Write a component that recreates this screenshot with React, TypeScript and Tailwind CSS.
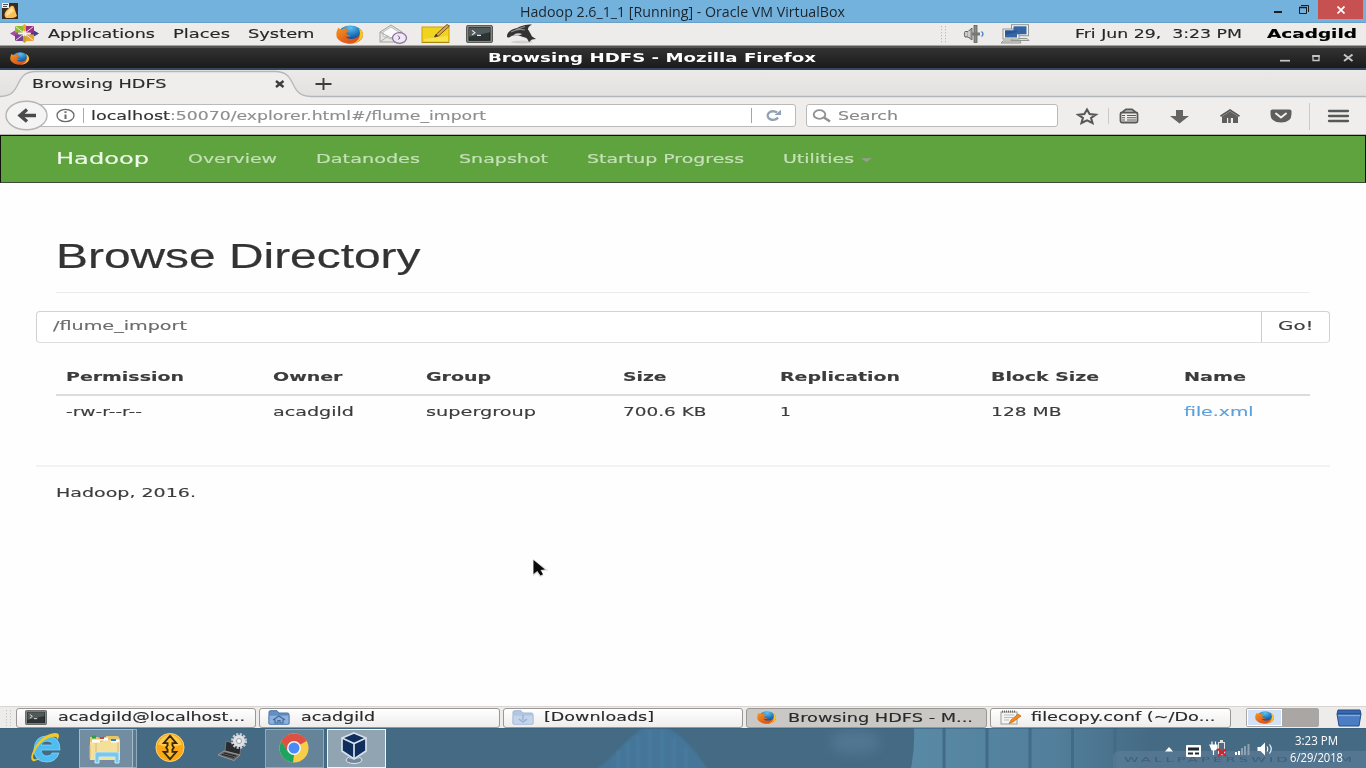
import { useLayoutEffect, useRef, useState, type ReactNode } from "react";

/* Text stretched horizontally so that it fills the given width. */
function Fit({ w, className = "", children }: { w: number; className?: string; children: ReactNode }) {
  const ref = useRef<HTMLSpanElement>(null);
  const [scale, setScale] = useState(1);
  useLayoutEffect(() => {
    if (ref.current && ref.current.offsetWidth > 0) {
      const probe = ref.current;
      const previous = probe.style.transform;
      probe.style.transform = "none";
      setScale(w / probe.getBoundingClientRect().width);
      probe.style.transform = previous;
    }
  }, [w]);
  return (
    <span className={`block shrink-0 whitespace-pre ${className}`} style={{ width: w }}>
      <span ref={ref} className="inline-block origin-left" style={{ transform: `scaleX(${scale})` }}>
        {children}
      </span>
    </span>
  );
}

function Firefox({ className = "" }: { className?: string }) {
  return (
    <svg className={`shrink-0 ${className}`} viewBox="0 0 32 32" preserveAspectRatio="none">
      <defs>
        <linearGradient id="ffo" x1="0" y1="0" x2="1" y2="1">
          <stop offset="0" stopColor="#f39a22" />
          <stop offset="0.5" stopColor="#e4661b" />
          <stop offset="1" stopColor="#d5411a" />
        </linearGradient>
        <radialGradient id="ffb" cx="0.5" cy="0.15" r="0.8">
          <stop offset="0" stopColor="#5cc3f0" />
          <stop offset="0.6" stopColor="#1c6fb8" />
          <stop offset="1" stopColor="#123f7a" />
        </radialGradient>
      </defs>
      <circle cx="17" cy="14.5" r="13.8" fill="url(#ffb)" />
      <path d="M3 4C0 10 0 16 1 21c3 7 9 10.500 16 10.500 9 0 15-7 15-15 0-5-2-8-4-10 1 4 1 7 0 10-2 5-6 7-10 7-4 0-6-2-7-4 3 1 5 0 7-2-3 0-5-1-6-3 0-2 2-3 4-3 0-2-3-3-5-3 0-1 1-2 2-3-3 0-5 1-6 2C6 7 4 7 3 4z" fill="url(#ffo)" />
      <path d="M27 5c3 3 5 7 5 11 0 8-6 14-13 15 6-3 9-8 9-13 1-5 0-9-1-13z" fill="#f6c62d" />
    </svg>
  );
}

function Terminal({ className = "" }: { className?: string }) {
  return (
    <svg className={`shrink-0 ${className}`} viewBox="0 0 27 20" preserveAspectRatio="none">
      <rect x="0.5" y="0.5" width="26" height="19" rx="1.5" fill="#858882" stroke="#4f524e" />
      <rect x="3" y="3" width="21" height="14" fill="#2d3436" stroke="#1c2122" />
      <path d="M3 3h21v5L3 13z" fill="#515a5b" />
      <path d="M6 6l3 2.5L6 11M11 11.5h4" stroke="#e6e9e5" strokeWidth="1.2" fill="none" />
    </svg>
  );
}

function Folder({ kind }: { kind: "home" | "down" }) {
  const home = kind === "home";
  return (
    <svg className="h-[15px] w-[22px] shrink-0" viewBox="0 0 22 15" preserveAspectRatio="none">
      <path d="M1 14V2Q1 .7 2.5.7H9L11 3h8.5Q21 3 21 4.5V14z" fill={home ? "#6590c4" : "#b3c7e2"} stroke={home ? "#4a72a8" : "#a3b8d5"} />
      <path d="M1 6q0-1 1-1h17.5q1.5 0 1.5 1v7q0 1.300-1.500 1.300h-17Q1 14.300 1 13z" fill={home ? "#8db1dc" : "#c3d4eb"} stroke={home ? "#5a84ba" : "#aec2de"} />
      {home ? (
        <path d="M5 10l6-4 6 4M7 9.500V13h3v-2.500h2V13h3V9.500" fill="none" stroke="#41699e" strokeWidth="1.2" />
      ) : (
        <path d="M11 5v5M7 9l4 3 4-3" fill="none" stroke="#94abcb" strokeWidth="1.2" />
      )}
    </svg>
  );
}

function HostTitleBar() {
  return (
    <div className="flex h-[23px] shrink-0 border-b border-[#68a0c8] bg-[#74b2de] text-[#1c252c]">
      <svg className="mt-[3px] ml-[2px] h-4 w-4 shrink-0" viewBox="0 0 16 16">
        <rect width="16" height="16" fill="#3b2a20" />
        <path d="M4 15Q1 12 4 8L9 3q2-1 3 1l3 9q-2 2-5 2z" fill="#fbbf55" />
        <path d="M5 13Q3 11 6 8l4-4 2 4z" fill="#ffe09b" />
        <rect x="0" y="0" width="7" height="5" fill="#eee" />
        <path d="M1 1.500h5M1 3.500h4" stroke="#555" />
      </svg>
      <Fit w={325} className="ml-[501.500px] font-['Open_Sans',sans-serif] text-[14.5px] leading-[23px]">
        Hadoop 2.6_1_1 [Running] - Oracle VM VirtualBox
      </Fit>
      <svg className="ml-[428.500px] h-[22px] w-[37px] shrink-0" viewBox="0 0 37 22" fill="none" stroke="#1c1c1c">
        <path d="M1 12h8" strokeWidth="2" />
        <path d="M26.500 7.500h7v6h-7zM28 5.500h7.500V12" />
        <path d="M26 7.500h8" strokeWidth="1.500" />
      </svg>
      <div className="ml-[8px] flex h-[19px] w-[45px] items-center justify-center bg-[#c75050]">
        <svg className="h-2 w-2" viewBox="0 0 8 8" stroke="#fff" strokeWidth="1.700">
          <path d="M.5.5l7 7M7.500.5l-7 7" />
        </svg>
      </div>
    </div>
  );
}

function GnomePanel() {
  return (
    <div className="flex h-[23px] shrink-0 items-center border-b border-[#a5a3a0] bg-[#edecea] pb-[1px] font-['DejaVu_Sans',sans-serif] text-[13px] leading-[18px] text-[#262626] [-webkit-text-stroke:0.150px]">
      <svg className="ml-[10px] h-[19px] w-[29px] shrink-0" viewBox="0 0 29 19">
        <path d="M14.500 0l4.500 4-4.500 3.500L10 4z" fill="#efa724" />
        <path d="M14.500 19l4.500-4-4.500-3.500L10 15z" fill="#b5a82c" />
        <path d="M0 9.500l5-3 5 3-5 3z" fill="#a14f9c" />
        <path d="M29 9.500l-5-3-5 3 5 3z" fill="#4a3d86" />
        <path d="M5 2h8v6.500H5z" fill="#8fbb31" />
        <path d="M16 2h8v6.500h-8z" fill="#9c2e8a" />
        <path d="M5 10.500h8V17H5z" fill="#7a3f96" />
        <path d="M16 10.500h8V17h-8z" fill="#eda12b" />
        <path d="M5.500 2.500l18 14M23.500 2.500l-18 14M8 9.500h13" stroke="#f4f0ee" strokeWidth="0.900" />
      </svg>
      <Fit w={107} className="ml-[8.500px]">Applications</Fit>
      <Fit w={57} className="ml-[18px]">Places</Fit>
      <Fit w={66.5} className="ml-[18px]">System</Fit>
      <Firefox className="mt-[1px] ml-[21.500px] h-[19px] w-[27px]" />
      <svg className="mt-[1px] ml-[15.500px] h-[20px] w-[30px] shrink-0" viewBox="0 0 30 20" preserveAspectRatio="none">
        <path d="M2 18V8L13 1l11 7v10z" fill="#e7e7e4" stroke="#a2a29f" />
        <path d="M5 8L13 3l8 5v4l-8 3-8-3z" fill="#fafafa" stroke="#bbb" />
        <path d="M2 18l8-6M2 8l11 6 11-6" stroke="#a8a8a6" fill="none" />
        <ellipse cx="21.500" cy="14" rx="7" ry="5.300" fill="#eee9f2" stroke="#8d6da0" strokeWidth="1.300" />
        <path d="M20 11.500l2 2.500-2 1.500" stroke="#666" fill="none" />
      </svg>
      <svg className="ml-[13px] h-[20px] w-[30px] shrink-0" viewBox="0 0 30 20" preserveAspectRatio="none">
        <rect x="1" y="3" width="27" height="15.500" fill="#f0d31e" stroke="#c9a20c" />
        <path d="M3 15l24-3v5H3z" fill="#f8e34e" />
        <path d="M1 18.500h27" stroke="#a98709" />
        <path d="M26 .5l2.500 1.500-11 10-4 1 2-3z" fill="#dda454" stroke="#68471a" strokeWidth="0.900" />
        <path d="M13 13l2-3 2 1.500z" fill="#333" />
      </svg>
      <Terminal className="mt-[1px] ml-[15px] h-[18px] w-[27px]" />
      <svg className="mt-[1px] ml-[14px] h-[20px] w-[31px] shrink-0" viewBox="0 0 31 20" preserveAspectRatio="none">
        <ellipse cx="15" cy="18" rx="11" ry="1.500" fill="#d2d0ce" />
        <path d="M0 12C0 8 5 5 10 4c4-2 8-3.500 15-3.500-3 1.500-4 3-4 5 2 3 3 5 4 7l4 2.500-4 .5-3 2.500-2-3.500q-2-1.500-4-1.500l-4-1.500c-4-.5-7 0-9 1.500-2 1-3 .5-3-1z" fill="#333" />
        <path d="M4 8q7-4 14-2M9 5.500l9-3" stroke="#8d8d8d" strokeWidth="1.100" fill="none" />
        <path d="M3 11.500q4 0 6-2 5-1 6 1-3 .5-5 .5-3 0-7 .5z" fill="#d2d2d2" />
      </svg>
      <svg className="mt-[1px] ml-[402px] h-[17px] w-[8px] shrink-0" viewBox="0 0 8 17">
        <path d="M1.500 0v17M5.500 0v17" stroke="#bdbcba" strokeDasharray="1.300 1.700" />
      </svg>
      <svg className="mt-[1px] ml-[14.500px] h-[18px] w-[23px] shrink-0" viewBox="0 0 23 18" preserveAspectRatio="none">
        <path d="M2 6.500h3l4-3.500v12L5 12H2Q.5 9 2 6.500z" fill="#aaa" stroke="#676965" />
        <path d="M3 7v4M6 6v6" stroke="#eee" />
        <rect x="11" y=".5" width="3" height="17" fill="#8b8e88" stroke="#5d605a" strokeWidth=".8" />
        <path d="M9 9h8" stroke="#777" strokeWidth="3" />
        <path d="M18.500 6.500q3 2.500 0 5" fill="none" stroke="#4e83c6" strokeWidth="1.400" />
      </svg>
      <svg className="ml-[15px] h-[20px] w-[29px] shrink-0" viewBox="0 0 29 20" preserveAspectRatio="none">
        <g stroke="#92948f">
          <rect x="10.500" y=".7" width="17" height="11" fill="#f5f5f3" />
          <path d="M12 14.500h14l2 2H10z" fill="#ddd" />
          <rect x="2" y="5" width="16" height="10" fill="#f5f5f3" />
          <path d="M2 17h17l1 2H0z" fill="#ddd" />
        </g>
        <rect x="12.500" y="2.300" width="13" height="8" fill="#3465a4" />
        <rect x="4" y="6.500" width="12" height="7" fill="#3465a4" />
        <path d="M4 11V6.500h12V8z" fill="#2a5493" />
      </svg>
      <Fit w={167} className="ml-[45px]">Fri Jun 29,  3:23 PM</Fit>
      <Fit w={90} className="ml-[25px] font-bold text-black">Acadgild</Fit>
    </div>
  );
}

function GuestTitleBar() {
  return (
    <div className="flex h-[24px] shrink-0 items-center border-t-2 border-b-2 border-t-[#55534f] border-b-[#34475f] bg-linear-to-b from-[#323232] to-[#1b1b1b] font-['DejaVu_Sans',sans-serif] text-[13px] leading-[18px] text-white">
      <Firefox className="ml-[10px] h-[13px] w-[19px]" />
      <Fit w={328} className="ml-[459px] font-bold">Browsing HDFS - Mozilla Firefox</Fit>
      <svg className="ml-[463px] h-5 w-[80px] shrink-0" viewBox="0 0 80 20" fill="none" stroke="#c6c6c4">
        <path d="M1 12.700h10" strokeWidth="1.700" />
        <path d="M34 8h6v4.500h-6z" strokeWidth="1.300" />
        <path d="M33.300 8h7.500" strokeWidth="1.900" />
        <path d="M65 6.500l8.500 6.500M73.500 6.500L65 13" strokeWidth="2" />
      </svg>
    </div>
  );
}

function TabStrip() {
  return (
    <div className="grid h-[28px] shrink-0 bg-linear-to-b from-[#ebeae8] to-[#e2e1df] font-['DejaVu_Sans',sans-serif] text-[13px] leading-[18px] text-[#2b2b2b] [-webkit-text-stroke:0.150px]">
      <svg className="col-start-1 row-start-1 h-[28px] w-[1366px]" viewBox="0 0 1366 28">
        <path d="M0 28v-1C24 27 12 1 36 1H275C299 1 287 27 311 27H1366v1z" fill="#efeeed" />
        <path d="M0 26.500C24 26.500 12 1.500 36 1.500H275C299 1.500 287 26.500 311 26.500H1366" fill="none" stroke="#b4b7ba" strokeWidth="1.300" />
      </svg>
      <div className="z-10 col-start-1 row-start-1 flex items-center">
        <Fit w={134.5} className="ml-[31.500px]">Browsing HDFS</Fit>
        <svg className="ml-[109px] h-3 w-[60px] shrink-0" viewBox="0 0 60 12" fill="none" stroke="#3d3d3d">
          <path d="M1 3l7.500 6M8.500 3L1 9" strokeWidth="2.400" />
          <path d="M40.500 6h16M48.500 0v12" strokeWidth="1.900" />
        </svg>
      </div>
    </div>
  );
}

function NavToolbar() {
  return (
    <div className="flex h-[37px] shrink-0 items-center border-b border-[#b9b7b5] bg-[#efeeed] pb-[1px] font-['DejaVu_Sans',sans-serif] text-[13px] leading-[18px] [-webkit-text-stroke:0.150px]">
      <svg className="z-10 ml-[5px] h-[31px] w-[43px] shrink-0" viewBox="0 0 43 31">
        <ellipse cx="21.500" cy="15.500" rx="20.500" ry="14.300" fill="#f5f4f4" stroke="#b5b4b3" strokeWidth="1.400" />
        <path d="M15 15.500h16M22 9.500l-7 6 7 6" fill="none" stroke="#4a4a4a" strokeWidth="3.400" />
      </svg>
      <div className="-ml-[10px] flex h-[23px] w-[758px] shrink-0 items-center rounded-r-[3px] border border-[#bcbab9] bg-white text-[#8e8e8e]">
        <svg className="ml-[17px] h-[15px] w-[20px] shrink-0" viewBox="0 0 20 15" fill="none" stroke="#6a6a6a">
          <ellipse cx="9.500" cy="7.500" rx="8.500" ry="6.200" strokeWidth="1.300" />
          <path d="M9.500 6.500V11M9.500 3.300v1.700" strokeWidth="2" />
        </svg>
        <span className="ml-[7px] h-[15px] w-px shrink-0 bg-[#aaa]" />
        <Fit w={79} className="ml-[6.500px] text-[#333]">localhost</Fit>
        <Fit w={316}>:50070/explorer.html#/flume_import</Fit>
        <span className="ml-[265.500px] h-[15px] w-px shrink-0 bg-[#a5a5a5]" />
        <svg className="ml-[13px] h-[13px] w-[17px] shrink-0" viewBox="0 0 17 13" fill="none" stroke="#94a1b1">
          <path d="M13 8.500A5.500 4.300 0 1 1 12 3.500" strokeWidth="2.300" />
          <path d="M16 .7V6H9.500z" fill="#94a1b1" stroke="none" />
        </svg>
      </div>
      <div className="ml-[10px] flex h-[23px] w-[252px] shrink-0 items-center rounded-[3px] border border-[#bcbab9] bg-white text-[#898989]">
        <svg className="ml-[5px] h-[14px] w-[20px] shrink-0" viewBox="0 0 20 14" fill="none" stroke="#929292">
          <ellipse cx="7.500" cy="5.500" rx="5.800" ry="4.400" strokeWidth="1.900" />
          <path d="M12 8.500l6 4" strokeWidth="2.600" />
        </svg>
        <Fit w={60} className="ml-[5.500px]">Search</Fit>
      </div>
      <svg className="ml-[18px] h-[32px] w-[280px] shrink-0" viewBox="0 0 280 32" fill="none" stroke="#585858">
        <path d="M11 9.500l2.600 4.500 6.200.7-4.700 3.300 1.400 5-5.500-2.600L5.500 23l1.400-5-4.700-3.300 6.200-.7z" strokeWidth="2.100" />
        <path d="M32.500 8v16M233.500 3v27" stroke="#cbc9c7" strokeWidth="1" />
        <rect x="44.500" y="12.500" width="17" height="10" rx="1.500" strokeWidth="1.800" />
        <path d="M46.500 12l3.500-2.500h6l3.500 2.500" strokeWidth="1.800" />
        <path d="M46 15.500h3M51 15.500h9M46 17.700h3M51 17.700h9M46 20h3M51 20h9" strokeWidth="1.100" />
        <path d="M100 10h7v6h6l-9.500 7.500-9.500-7.500h6z" fill="#646464" stroke="none" />
        <path d="M146 16.500l8-5.200 8 5.200v6.500h-5v-5h-2.200v5h-2.600v-5H151v5h-5z" fill="#5e5e5e" stroke="none" />
        <path d="M144.500 16.300l9.500-6.300 9.500 6.300" strokeWidth="1.700" />
        <path d="M194.500 11q0-1.500 2-1.500h17q2 0 2 1.500v3q0 8.500-10.500 8.500T194.500 14z" fill="#5e5e5e" stroke="none" />
        <path d="M200 13.500l5 4 5-4" stroke="#f0efee" strokeWidth="2" strokeLinecap="round" />
        <path d="M253 11h19M253 16h19M253 21h19" strokeWidth="2.300" strokeLinecap="round" />
      </svg>
    </div>
  );
}

function SiteNav() {
  return (
    <nav className="flex h-[48px] shrink-0 items-center border border-[#101408] border-b-[#3c4b3a] bg-[#5fa33f] font-['DejaVu_Sans',sans-serif] text-[13px] leading-[20px] text-[#c6e0b8] [-webkit-text-stroke:0.150px]">
      <Fit w={93} className="ml-[55px] text-[16px] text-[#eff7eb]">Hadoop</Fit>
      <Fit w={89} className="ml-[38.500px]">Overview</Fit>
      <Fit w={104} className="ml-[39px]">Datanodes</Fit>
      <Fit w={89} className="ml-[39px]">Snapshot</Fit>
      <Fit w={157} className="ml-[39px]">Startup Progress</Fit>
      <Fit w={71} className="ml-[39px]">Utilities</Fit>
      <svg className="mt-[2px] ml-[7.500px] h-1 w-[11px] shrink-0" viewBox="0 0 11 4"><path d="M0 .2h11L5.500 4z" fill="#999d93" /></svg>
    </nav>
  );
}

const columns = [
  { head: "Permission", hw: 118, cell: "-rw-r--r--", cw: 76 },
  { head: "Owner", hw: 69.5, cell: "acadgild", cw: 81 },
  { head: "Group", hw: 65, cell: "supergroup", cw: 110 },
  { head: "Size", hw: 43.5, cell: "700.6 KB", cw: 83.5 },
  { head: "Replication", hw: 120, cell: "1", cw: 11 },
  { head: "Block Size", hw: 108, cell: "128 MB", cw: 70.5 },
  { head: "Name", hw: 62, cell: "file.xml", cw: 69.5 },
];

function DirectoryPage() {
  return (
    <main className="flex h-[523px] shrink-0 flex-col bg-[#fefefe] px-[36px] font-['DejaVu_Sans',sans-serif] text-[13px] leading-[18px] text-[#3c3c3c] [-webkit-text-stroke:0.150px]">
      <header className="mx-[20px] flex h-[110px] shrink-0 border-b border-[#ececec] pt-[53px]">
        <h1 className="font-['Liberation_Sans',sans-serif] text-[34.500px] leading-[40px] text-[#333] [-webkit-text-stroke:0.200px]">
          <Fit w={364.5}>Browse Directory</Fit>
        </h1>
      </header>
      <div className="mt-[18px] flex h-[32px] shrink-0 rounded-[4px] border border-[#d2d2d2] border-b-[#dedede] bg-white">
        <div className="flex w-[1225px] items-center border-r border-[#ccc] pb-[2px] text-[#6b6b6b]">
          <Fit w={134} className="ml-[16px]">/flume_import</Fit>
        </div>
        <button className="flex w-[67px] items-center justify-start pb-[2px] pl-[15.500px] text-left"><Fit w={35.5}>Go!</Fit></button>
      </div>
      <table className="mx-[20px] mt-[15px] w-[1254px] shrink-0 table-fixed text-left">
        <colgroup>
          <col className="w-[207px]" />
          <col className="w-[153px]" />
          <col className="w-[197px]" />
          <col className="w-[157px]" />
          <col className="w-[211px]" />
          <col className="w-[193px]" />
          <col />
        </colgroup>
        <thead>
          <tr className="h-[37px] border-b-2 border-[#dcdcdc]">
            {columns.map((c) => (
              <th key={c.head} className="p-0 pt-[2px] pl-[10.200px]"><Fit w={c.hw}>{c.head}</Fit></th>
            ))}
          </tr>
        </thead>
        <tbody>
          <tr className="h-[33px]">
            {columns.map((c) => (
              <td key={c.head} className={c.head === "Name" ? "p-0 pl-[10.200px] text-[#5b9fdb]" : "p-0 pl-[10.200px]"}>
                <Fit w={c.cw}>{c.cell}</Fit>
              </td>
            ))}
          </tr>
        </tbody>
      </table>
      <footer className="mt-[37px] border-t-2 border-[#f3f3f3] pt-[17px] pl-[20px]">
        <Fit w={140}>Hadoop, 2016.</Fit>
      </footer>
    </main>
  );
}

function Pointer() {
  return (
    <svg className="absolute top-[558px] left-[532px] h-[20px] w-[18px]" viewBox="0 0 18 20">
      <path d="M1 1v17l4-3 3 4 3.500-1.500-2-4.500 7-.5z" fill="#ccc" opacity=".7" />
      <path d="M1.500 2v14l3.800-3 3.200 4.500 2.500-1.200L8.500 12l4.500-.5z" fill="#0a0a0a" />
    </svg>
  );
}

function TaskButton({ active = false, icon, label, w, className }: { active?: boolean; icon: ReactNode; label: string; w: number; className: string }) {
  return (
    <div className={`flex h-[20px] shrink-0 items-center rounded-[3px] border border-[#9a9794] ${active ? "bg-[#cac8c5]" : "bg-linear-to-b from-white to-[#eeedec]"} ${className}`}>
      {icon}
      <Fit w={w} className={active ? "" : "-mt-[2px]"}>{label}</Fit>
    </div>
  );
}

function GnomeTaskbar() {
  return (
    <div className="flex h-[22px] shrink-0 items-center border-t border-[#d8d5d3] bg-[#edecea] font-['DejaVu_Sans',sans-serif] text-[13px] leading-[16px] text-[#2a2a2a] [-webkit-text-stroke:0.150px]">
      <svg className="ml-[5px] h-[16px] w-[7px] shrink-0" viewBox="0 0 7 16"><path d="M1.500 0v16M5.500 0v16" stroke="#c9c7c4" strokeDasharray="1.300 1.700" /></svg>
      <TaskButton className="ml-[4px] w-[240px] gap-[10.500px] pl-[8px]" icon={<Terminal className="h-[15px] w-[22px]" />} label="acadgild@localhost..." w={187} />
      <TaskButton className="ml-[3px] w-[241px] gap-[10.500px] pl-[8px]" icon={<Folder kind="home" />} label="acadgild" w={74} />
      <TaskButton className="ml-[3px] w-[240px] gap-[10px] pl-[8px]" icon={<Folder kind="down" />} label="[Downloads]" w={110} />
      <TaskButton active className="ml-[3px] w-[241px] gap-[12px] pl-[10px]" icon={<Firefox className="h-[13px] w-[19px]" />} label="Browsing HDFS - M..." w={185} />
      <TaskButton
        className="ml-[3px] w-[241px] gap-[10px] pl-[9px]"
        icon={
          <svg className="h-[15px] w-[21px] shrink-0" viewBox="0 0 21 15">
            <rect x="1" y="2" width="16" height="12" fill="#f5f5f3" stroke="#999b96" />
            <path d="M2 1.500h14" stroke="#666" strokeWidth="2" strokeDasharray="1 1" />
            <path d="M4 5h10M4 7.500h9M4 10h5" stroke="#bbb" />
            <path d="M18 4l3 2-8 6-4 1.500 2-3.500z" fill="#f28b1a" stroke="#b4550c" strokeWidth=".6" />
          </svg>
        }
        label="filecopy.conf (~/Do..."
        w={184.5}
      />
      <div className="ml-[15px] flex h-[19px] w-[73px] shrink-0 rounded-[2px] border border-[#aaa6a3] bg-[#aaa6a3]">
        <div className="flex h-full w-[35px] items-center justify-center border border-white bg-[#d3e1f6]"><Firefox className="h-[13px] w-[19px]" /></div>
      </div>
      <svg className="ml-[17px] h-[18px] w-[26px] shrink-0" viewBox="0 0 26 18">
        <path d="M2 1h22l1 4H1z" fill="#3969ad" stroke="#244b85" />
        <path d="M1 5h24l-2 12H3z" fill="#4a7dc1" stroke="#274f8b" />
        <path d="M2 6.500h22" stroke="#83a9dc" strokeWidth="1.400" />
      </svg>
    </div>
  );
}

function WindowsTaskbar() {
  return (
    <div className="grid h-[40px] shrink-0 overflow-hidden bg-[#456a84]">
      <svg className="col-start-1 row-start-1 h-[40px] w-[1366px]" viewBox="0 0 1366 40">
        <defs>
          <filter id="soft" x="-50%" y="-50%" width="200%" height="200%"><feGaussianBlur stdDeviation="6" /></filter>
          <filter id="edge"><feGaussianBlur stdDeviation="1" /></filter>
          <linearGradient id="sea" x1="0" x2="1">
            <stop offset="0" stopColor="#5889a5" />
            <stop offset=".6" stopColor="#527f9b" />
            <stop offset="1" stopColor="#456a84" />
          </linearGradient>
        </defs>
        <g filter="url(#edge)">
          <path d="M590 44C615 35 630 -2 655 -2s41 28 55 46z" fill="#44769a" />
          <path d="M618 22v24M628 14v30M638 8v36M650 3v40M662 3v40M674 10v34M686 20v26" stroke="#4e86aa" strokeWidth="2" opacity=".5" />
        </g>
        <ellipse cx="855" cy="14" rx="25" ry="12" fill="#587f9c" filter="url(#soft)" opacity=".6" />
        <path d="M914 0h236v40H911q4-20 3-40z" fill="url(#sea)" />
        <path d="M944 0v40M987 0v40M1030 0v40M1072.500 0v40M1115 0v40" stroke="#426b88" strokeWidth="3" />
        <path d="M1113 40V30q0-7 7-7h246v17z" fill="#6786a0" opacity=".45" />
        <text x="1124" y="34" textLength="231" lengthAdjust="spacingAndGlyphs" letterSpacing="1.5" fontFamily="DejaVu Sans, sans-serif" fontSize="7" fill="#304f67" opacity=".6">WALLPAPERSWIDE.COM</text>
        <path d="M0 .5h1366" stroke="#365b76" opacity=".5" />
      </svg>
      <div className="z-10 col-start-1 row-start-1 flex items-center">
        <svg className="ml-[30px] h-[32px] w-[32px] shrink-0" viewBox="0 0 32 32">
          <path d="M30 18H11q1 6 6 6 4 0 5-3h7q-3 9-12 9Q4 30 4 17 5 4 17 4q13 0 13 14zM11 13h12q-1-4-6-4t-6 4z" fill="#4dbdf2" stroke="#7fd6f9" strokeWidth=".8" />
          <path d="M3 29q-4-2 1-12Q10 5 20 2q9-3 9 2 0 2-2 4 1-4-5-3Q13 7 7 16q-6 9-3 11 2 1 6-1-4 4-7 3z" fill="#f2c928" />
        </svg>
        <div className="ml-[17px] flex h-[39px] w-[54px] shrink-0 items-center justify-center border border-[#a7bac8] bg-[#728da1]">
          <svg className="mr-[2px] h-[31px] w-[34px]" viewBox="0 0 34 31">
            <path d="M2 27V4h8l3 2h5V3h12l2 3v21z" fill="#e4c66c" />
            <path d="M2 27V9h12l2-2h16v20z" fill="#f4df9b" />
            <path d="M4 8h8M12 6h8M23 8h8" stroke="#fff" strokeWidth="3" />
            <path d="M4 4h4" stroke="#20a848" strokeWidth="3" /><path d="M12 5h4" stroke="#d84235" strokeWidth="2" /><path d="M23 7h5" stroke="#3184cc" strokeWidth="2" />
            <path d="M2 26V12M8 26V10M30 26V9" stroke="#d7bc72" />
            <path d="M7 30V21q0-2 2-2h20q2 0 2 2v9h-4v-6H11v6z" fill="#7cc7e9" stroke="#c5eafa" />
          </svg>
        </div>
        <span className="h-[39px] w-[4px] shrink-0 border border-l-0 border-[#91a9ba] bg-[#5b7b93]" />
        <svg className="mb-[1px] ml-[17px] h-[31px] w-[32px] shrink-0" viewBox="0 0 32 32">
          <circle cx="16" cy="16" r="14.500" fill="#fba816" stroke="#fdd37a" />
          <path d="M3.500 13Q7 3 16 3t12.500 10q-12 5-25 0z" fill="#ffd35d" opacity=".8" />
          <path d="M16 4l6.500 7.500h-4v2.500l1.500 2-1.500 2v2.500h4L16 28l-6.500-7.500h4V18L12 16l1.500-2v-2.500h-4z" fill="#ffbd27" stroke="#392907" strokeWidth="1.900" />
        </svg>
        <svg className="mb-[2px] ml-[31px] h-[30px] w-[31px] shrink-0" viewBox="0 0 31 30">
          <path d="M9 9l15 4-1 10-15-4z" fill="#292c2e" stroke="#777" />
          <path d="M7 19l16 4-6 5.500L1 23z" fill="#5b5d5e" stroke="#999" />
          <path d="M7 21l12 3M5 22.500l12 3" stroke="#222" />
          <circle cx="22" cy="9" r="6.500" fill="none" stroke="#c9cfd4" strokeWidth="3" strokeDasharray="2 1.400" />
          <circle cx="22" cy="9" r="6" fill="#dcdfe3" />
          <circle cx="22" cy="9" r="2.500" fill="#f7f7f7" stroke="#9ba0a5" />
        </svg>
        <div className="ml-[17px] flex h-[39px] w-[59px] shrink-0 items-center justify-center border border-[#91a9ba] bg-[#65849a]">
          <svg className="mr-[1px] h-[30px] w-[30px]" viewBox="0 0 30 30">
            <circle cx="15" cy="15" r="14.500" fill="#f7ce46" />
            <path d="M15 15L2.400 8A14.500 14.500 0 0 1 27.600 8z" fill="#dd5144" />
            <path d="M2.400 8L9 18.500 15 22l-1 7.500A14.500 14.500 0 0 1 2.400 8z" fill="#1da462" />
            <path d="M2.400 8A14.500 14.500 0 0 1 27.600 8H15L8.500 18z" fill="#dd5144" />
            <circle cx="15" cy="15" r="7" fill="#f5f5f5" />
            <circle cx="15" cy="15" r="5.500" fill="#4c8bf5" />
          </svg>
        </div>
        <div className="ml-[3px] flex h-[39px] w-[59px] shrink-0 items-center justify-center border border-[#f0f4f7] bg-[#91a4b1]">
          <svg className="mr-[5px] h-[32px] w-[28px]" viewBox="0 0 28 32">
            <ellipse cx="14" cy="28" rx="8" ry="3.500" fill="#75879a" stroke="#dee6ee" />
            <path d="M9 20h10v7H9z" fill="#9cacbc" />
            <path d="M14 1l12 5v13l-12 8-12-8V6z" fill="#102e5d" stroke="#d8e2ed" strokeWidth="1.700" />
            <path d="M2 6l12 5.500L26 6M14 11.500V27" fill="none" stroke="#d8e2ed" strokeWidth="1.700" />
          </svg>
        </div>
        <svg className="ml-[778px] h-[24px] w-[112px] shrink-0" viewBox="0 0 112 24">
          <path d="M1 15.500h8L5 11z" fill="#fff" />
          <rect x="22" y="9" width="15" height="12" rx="1" fill="#fff" />
          <path d="M24 11.500h11v3H24zM24 16.500h5v2h-5zM31 16.500h4v2h-4z" fill="#1d2730" />
          <path d="M48 5.500v3M51.500 5.500v3M46 9h7v3l-2 2h-3zM49.500 14v5" stroke="#fff" strokeWidth="1.200" fill="#fff" />
          <rect x="54.500" y="6.500" width="6" height="12" fill="#536b7d" stroke="#dbe3e9" />
          <path d="M56 5h3" stroke="#dbe3e9" strokeWidth="2" />
          <path d="M54 13l8 7M62 13l-8 7" stroke="#d91f27" strokeWidth="2.300" />
          <path d="M72 19v-3M75 19v-4" stroke="#fff" strokeWidth="2" />
          <path d="M78 19v-7M81 19v-9M84.500 19V8" stroke="#8fa1ae" strokeWidth="2" />
          <path d="M93.500 11h3l4.500-4.500v13l-4.500-4.500h-3z" fill="#fff" />
          <path d="M103 10.500q1.500 2.500 0 5M105.500 8.500q3.500 4.500 0 9" stroke="#fff" fill="none" strokeWidth="1.100" />
        </svg>
        <div className="mt-[2px] flex flex-col items-center pl-[14px] font-['Open_Sans',sans-serif] text-[12px] leading-[17px] text-white">
          <Fit w={43}>3:23 PM</Fit>
          <Fit w={53}>6/29/2018</Fit>
        </div>
      </div>
    </div>
  );
}

export default function App() {
  return (
    <div className="relative flex h-[768px] w-[1366px] flex-col overflow-hidden bg-white">
      <HostTitleBar />
      <GnomePanel />
      <GuestTitleBar />
      <TabStrip />
      <NavToolbar />
      <SiteNav />
      <DirectoryPage />
      <GnomeTaskbar />
      <WindowsTaskbar />
      <Pointer />
    </div>
  );
}
